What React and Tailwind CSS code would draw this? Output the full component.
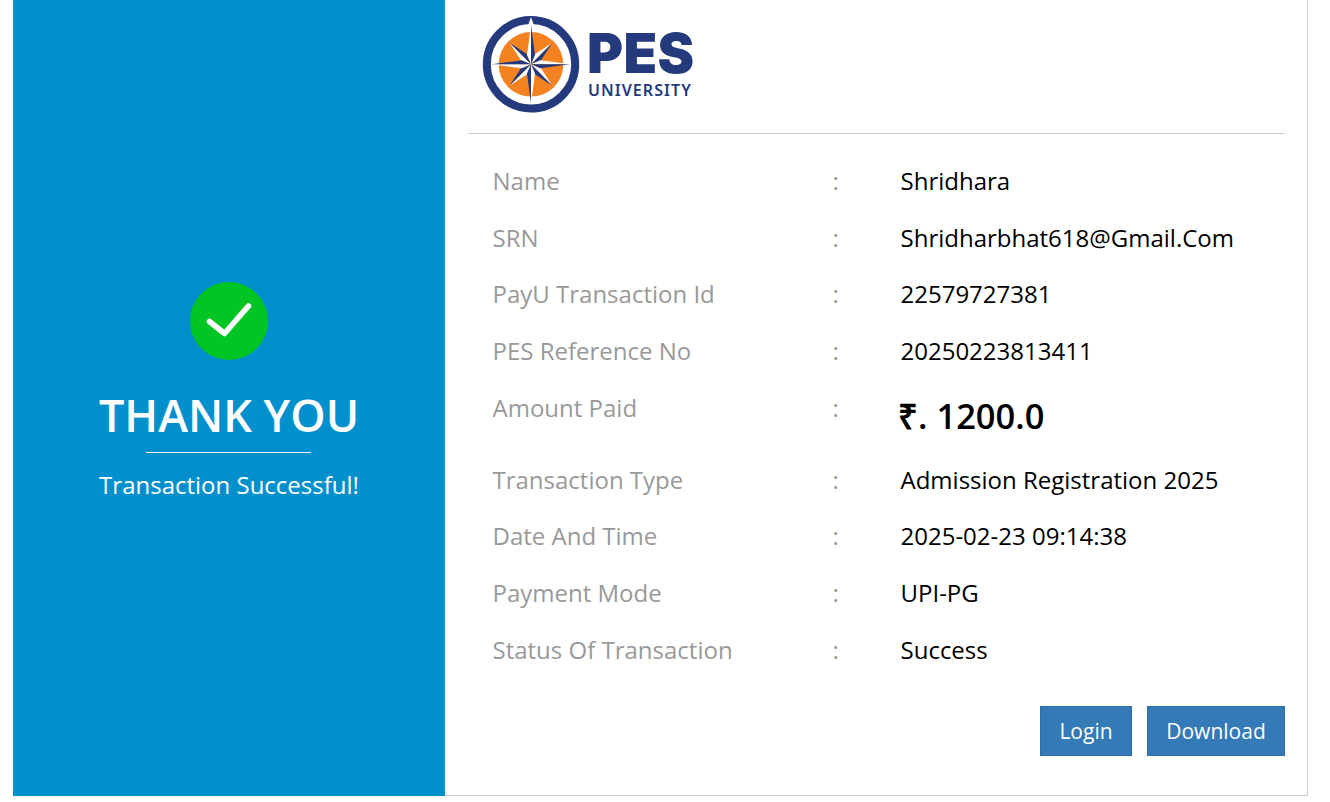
const rows = [
  ['Name', 'Shridhara', 'h-[57px]'],
  ['SRN', 'Shridharbhat618@Gmail.Com', 'h-[56px]'],
  ['PayU Transaction Id', '22579727381', 'h-[57px]'],
  ['PES Reference No', '20250223813411', 'h-[57px]'],
  ['Amount Paid', '₹. 1200.0', 'h-[72px]'],
  ['Transaction Type', 'Admission Registration 2025', 'h-[56px]'],
  ['Date And Time', '2025-02-23 09:14:38', 'h-[57px]'],
  ['Payment Mode', 'UPI-PG', 'h-[57px]'],
  ['Status Of Transaction', 'Success', 'h-[56px]'],
];

function Compass() {
  return (
    <svg className="h-[98px] w-[98px] shrink-0" viewBox="0 0 98 98">
      <circle cx="49" cy="49.3" r="44.2" fill="#fff" stroke="#243a7d" strokeWidth="8" />
      <circle cx="49" cy="49.3" r="32.3" fill="#f58220" />
      {[45, 135, 225, 315].map((a) => (
        <g key={a} transform={`rotate(${a} 49 49.3)`}>
          <path d="M49 19L44.6 40L49 49.3Z" fill="#fff" />
          <path d="M49 19L53.4 40L49 49.3Z" fill="#243a7d" />
        </g>
      ))}
      <path d="M49 2L46.5 9V12H51.5V9Z" fill="#fff" />
      {[0, 90, 180, 270].map((a) => (
        <g key={a} transform={`rotate(${a} 49 49.3)`}>
          <path d="M49 10L45 40L49 49.3Z" fill="#fff" />
          <path d="M49 10L53 40L49 49.3Z" fill="#243a7d" />
        </g>
      ))}
    </svg>
  );
}

export default function App() {
  return (
    <div className="flex h-[802px] w-[1330px] overflow-hidden bg-white pl-[13px] font-['Open_Sans',sans-serif]">
      <aside className="flex h-[796px] w-[432px] shrink-0 flex-col items-center bg-[#0290cd] pt-[281px] text-white">
        <svg className="h-[80px] w-[80px] shrink-0" viewBox="0 0 80 80">
          <circle cx="40" cy="40" r="39" fill="#00c523" />
          <path d="M20.5 40.5L35.5 52.5L59.5 25" fill="none" stroke="#fff" strokeWidth="5.6" strokeLinecap="round" strokeLinejoin="round" />
        </svg>
        <h1 className="mt-[24px] text-[45px] leading-[60px] font-semibold whitespace-nowrap">THANK YOU</h1>
        <div className="mt-[7px] mr-[2px] h-px w-[165px] bg-white/90" />
        <p className="mt-[16px] text-[24px] leading-[32px] whitespace-nowrap">Transaction Successful!</p>
      </aside>
      <main className="h-[796px] w-[863px] shrink-0 border-r border-b border-[#cccccc] pr-[22px] pl-[23px]">
        <header className="flex h-[134px] border-b border-[#cccccc] pt-[15px] pl-[14px]">
          <Compass />
          <div className="ml-[7px] pt-[10px] text-[#243a7d]">
            <div className="font-['Inter',sans-serif] text-[55px] leading-[56px] font-black tracking-[0.3px]">PES</div>
            <div className="pl-px font-['Noto_Sans',sans-serif] text-[16px] leading-[18px] font-semibold tracking-[1.05px]">UNIVERSITY</div>
          </div>
        </header>
        <dl className="pt-[30px] pl-[24.5px] text-[24px] leading-[33px]">
          {rows.map(([label, value, height]) => (
            <div key={label} className={`flex ${height}`}>
              <dt className="w-[340px] text-[#999999]">{label}</dt>
              <span className="w-[68px] text-[#999999]">:</span>
              {label === 'Amount Paid' ? (
                <dd className="-ml-[2.5px] text-[34.5px] leading-[49px] font-semibold whitespace-nowrap">{value}</dd>
              ) : (
                <dd className="whitespace-nowrap">{value}</dd>
              )}
            </div>
          ))}
        </dl>
        <div className="mt-[17px] flex justify-end gap-[15px] text-[21px] text-white">
          <button className="h-[50px] w-[92px] border border-[#2e6da4] bg-[#337ab7] pt-[2px]">Login</button>
          <button className="h-[50px] w-[138px] border border-[#2e6da4] bg-[#337ab7] pt-[2px]">Download</button>
        </div>
      </main>
    </div>
  );
}
